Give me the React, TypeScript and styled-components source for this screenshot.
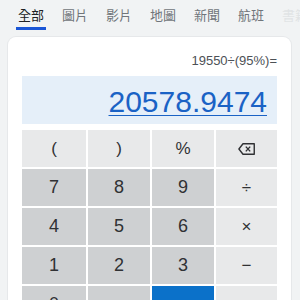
import styled, { createGlobalStyle } from "styled-components";

const GlobalStyle = createGlobalStyle`
  html, body {
    margin: 0;
    padding: 0;
    background: #f1f3f4;
    overflow: hidden;
  }
  body {
    font-family: "Liberation Sans", Arial, "Noto Sans CJK TC", sans-serif;
  }
`;

const Page = styled.div`
  width: 300px;
  height: 300px;
  overflow: hidden;
  background: #f1f3f4;
`;

const Tabs = styled.nav`
  display: flex;
  gap: 14px;
  padding: 0 0 0 16px;
  height: 37px;
  box-sizing: border-box;
`;

const Tab = styled.div<{ $active?: boolean; $faded?: boolean }>`
  width: 30px;
  flex: none;
  display: flex;
  justify-content: center;
  padding-top: 7px;
  box-sizing: border-box;
  height: 30px;
  font: 13px/16px "Noto Sans CJK TC", sans-serif;
  color: ${({ $active }) => ($active ? "#202124" : "#70757a")};
  opacity: ${({ $faded }) => ($faded ? 0.12 : 1)};
  border-bottom: 3px solid ${({ $active }) => ($active ? "#1a56d6" : "transparent")};
  white-space: nowrap;
`;

const Card = styled.section`
  margin: 0 9px 0 8px;
  background: #fff;
  border-radius: 8px;
  box-shadow: 0 0 0 1px #e6e8ea;
  padding: 16px 14px 0;
`;

const Expression = styled.div`
  text-align: right;
  font-size: 13px;
  line-height: 16px;
  color: #4d5156;
  height: 16px;
  margin-bottom: 7px;
`;

const Result = styled.div`
  background: #e5eff9;
  height: 48px;
  display: flex;
  align-items: center;
  justify-content: flex-end;
  padding: 0 10px 0 0;
`;

const ResultValue = styled.a`
  font-size: 30px;
  line-height: 34px;
  color: #1a62c5;
  text-decoration: underline;
  text-decoration-thickness: 1px;
  text-underline-offset: 3px;
  margin-top: 3px;
`;

const Keypad = styled.div`
  margin-top: 6px;
  display: grid;
  grid-template-columns: 64px 62px 62px 1fr;
  grid-auto-rows: 37px;
  gap: 2px;
`;

type KeyKind = "fn" | "num" | "eq";

const Key = styled.button<{ $kind: KeyKind }>`
  border: none;
  margin: 0;
  padding: 0;
  display: flex;
  align-items: center;
  justify-content: center;
  font-family: "Liberation Sans", Arial, sans-serif;
  font-size: ${({ $kind }) => ($kind === "num" ? "18px" : "17px")};
  color: ${({ $kind }) => ($kind === "eq" ? "#fff" : "#303134")};
  background: ${({ $kind }) =>
    $kind === "num" ? "#ced0d2" : $kind === "eq" ? "#0b71c9" : "#e8e9ea"};
`;

const BackspaceIcon = () => (
  <svg width="17" height="12" viewBox="0 0 17 12" fill="none">
    <path
      d="M5 0.75 H16.25 V11.25 H5 L0.9 6 Z"
      stroke="#303134"
      strokeWidth="1.4"
      strokeLinejoin="round"
    />
    <path d="M7.8 3.6 L12.2 8.4 M12.2 3.6 L7.8 8.4" stroke="#303134" strokeWidth="1.4" />
  </svg>
);

const tabs = ["全部", "圖片", "影片", "地圖", "新聞", "航班", "書籍"];

const keys: { label: React.ReactNode; kind: KeyKind }[] = [
  { label: "(", kind: "fn" },
  { label: ")", kind: "fn" },
  { label: "%", kind: "fn" },
  { label: <BackspaceIcon />, kind: "fn" },
  { label: "7", kind: "num" },
  { label: "8", kind: "num" },
  { label: "9", kind: "num" },
  { label: "÷", kind: "fn" },
  { label: "4", kind: "num" },
  { label: "5", kind: "num" },
  { label: "6", kind: "num" },
  { label: "×", kind: "fn" },
  { label: "1", kind: "num" },
  { label: "2", kind: "num" },
  { label: "3", kind: "num" },
  { label: "−", kind: "fn" },
  { label: "0", kind: "num" },
  { label: ".", kind: "num" },
  { label: "=", kind: "eq" },
  { label: "+", kind: "fn" },
];

export default function App() {
  return (
    <Page>
      <GlobalStyle />
      <Tabs>
        {tabs.map((t, i) => (
          <Tab key={t} $active={i === 0} $faded={i === tabs.length - 1}>
            {t}
          </Tab>
        ))}
      </Tabs>
      <Card>
        <Expression>19550÷(95%)=</Expression>
        <Result>
          <ResultValue>20578.9474</ResultValue>
        </Result>
        <Keypad>
          {keys.map((k, i) => (
            <Key key={i} $kind={k.kind}>
              {k.label}
            </Key>
          ))}
        </Keypad>
      </Card>
    </Page>
  );
}
